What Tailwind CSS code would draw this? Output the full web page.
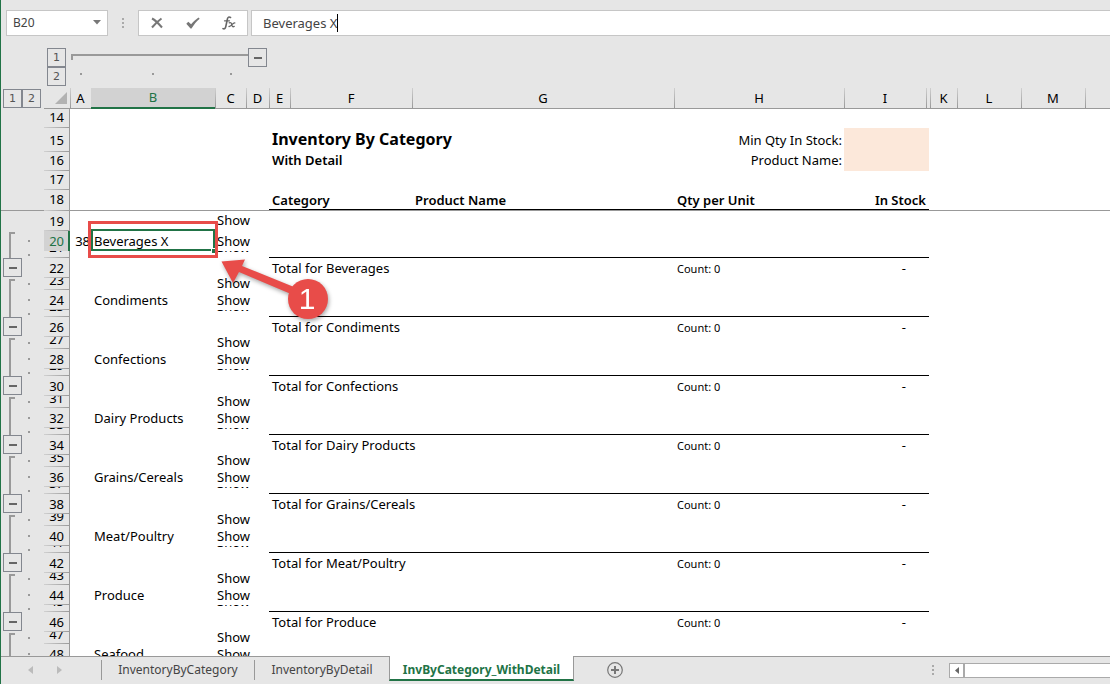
<!DOCTYPE html>
<html lang="en">
<head>
<meta charset="utf-8">
<title>Inventory By Category</title>
<script src="https://cdn.jsdelivr.net/npm/@tailwindcss/browser@4"></script>
</head>
<body class="h-screen overflow-hidden flex flex-col bg-[#e6e6e6] border-l border-[#217346] font-['Noto_Sans',sans-serif] text-[13px] leading-[18px] text-black">

<header class="shrink-0 flex pl-[5px] pt-[10px] text-[#444] text-[12px]">
  <button aria-label="Name box, B20" class="w-[102px] h-[26px] px-[6px] flex items-center justify-between bg-white border border-[#c6c6c6]">
    <span>B20</span>
    <svg width="8" height="7" viewBox="0 0 8 7" fill="#777"><path d="M0 0h8L4 4.500z"/></svg>
  </button>
  <div class="w-[30px] flex flex-col items-center justify-center gap-[2px]">
    <i class="size-[2px] bg-[#aaa]"></i><i class="size-[2px] bg-[#aaa]"></i><i class="size-[2px] bg-[#aaa]"></i>
  </div>
  <div class="w-[110px] h-[26px] flex items-center justify-around bg-white border border-[#c6c6c6]">
    <button aria-label="Cancel" class="w-[34px] h-full flex items-center justify-center"><svg width="12" height="12" viewBox="0 0 12 12" fill="none" stroke="#777" stroke-width="2"><path d="M1 1.500C4 3 8 7 11 10.500M10.500 1.500C7 4 4 7 1 10.500"/></svg></button>
    <button aria-label="Enter" class="w-[34px] h-full flex items-center justify-center"><svg width="14" height="12" viewBox="0 0 14 12" fill="#777"><path d="M0.300 6.800L2.300 4.800l2.800 2.500C7.500 4.500 10 2.200 12.500 0.500L13.700 1.700C10.500 4 8 7.500 5.500 11.500H4.500z"/></svg></button>
    <button aria-label="Insert function" class="w-[34px] h-full flex items-center justify-center"><svg width="14" height="14" viewBox="0 0 14 14" fill="none" stroke="#666" stroke-linecap="round"><path d="M8.500 1.500C7 0.500 5.800 1 5.400 3L3.800 10.500C3.400 12.600 2.300 13.400 1 12.600" stroke-width="1.600"/><path d="M2.500 4.800h5" stroke-width="1.200"/><path d="M7.200 6.800c2-0.800 2.200 0.400 2.600 2s0.800 2.500 2.400 1.600M12.800 6.800c-2.200-0.300-3.600 4-5.800 3.700" stroke-width="1.300"/></svg></button>
  </div>
  <div class="ml-[3px] flex-1 h-[26px] pl-[11px] flex items-center bg-white border border-r-0 border-[#c6c6c6] text-[13px]">
    <input aria-label="Formula bar" value="Beverages X" class="field-sizing-content outline-none">
    <span class="w-px h-[18px] bg-black"></span>
  </div>
</header>

<section aria-label="Column outline" class="shrink-0 h-[52px] pt-[12px] pl-[46px] flex text-[11px] text-[#555] font-['DejaVu_Sans',sans-serif]">
  <div class="flex flex-col">
    <button class="size-[19px] leading-[17px] border border-[#83878f]">1</button>
    <button class="size-[19px] leading-[17px] border border-[#83878f]">2</button>
  </div>
  <div class="ml-[5px] w-[177px] pt-[6px]">
    <div class="h-[6px] border-t-2 border-l-2 border-[#999]"></div>
    <div class="mt-[13px] pl-[9px] flex">
      <i class="size-[2px] bg-[#999]"></i><i class="ml-[70px] size-[2px] bg-[#999]"></i><i class="ml-[76px] size-[2px] bg-[#999]"></i>
    </div>
  </div>
  <button aria-label="Collapse columns" class="size-[19px] flex items-center justify-center border border-[#83878f]"><i class="w-[8px] h-[2px] bg-[#666]"></i></button>
</section>

<main class="flex-1 min-h-0 overflow-hidden">
  <table class="w-full table-fixed border-separate border-spacing-0 bg-white">
    <colgroup>
      <col class="w-[21px]"><col class="w-[22px]"><col class="w-[26px]">
      <col class="w-[21px]"><col class="w-[124px]"><col class="w-[31px]"><col class="w-[23px]">
      <col class="w-[21px]"><col class="w-[122px]"><col class="w-[262px]"><col class="w-[170px]">
      <col class="w-[82px]"><col class="w-[4px]"><col class="w-[27px]"><col class="w-[64px]"><col class="w-[64px]"><col>
    </colgroup>
    <thead><tr id="letters" class="bg-[#e6e6e6]"></tr></thead>
    <tbody id="rows"></tbody>
  </table>
</main>

<footer class="shrink-0 h-[28px] flex items-start text-[#444] text-[12px]">
  <div class="h-[28px] w-[100px] pl-[27px] pt-[8px] flex gap-[24px] border-t border-[#999]">
    <button aria-label="Previous sheets" class="h-[10px]"><svg width="5" height="8" viewBox="0 0 5 8" fill="#bbb"><path d="M5 0v8L0 4z"/></svg></button>
    <button aria-label="Next sheets" class="h-[10px]"><svg width="5" height="8" viewBox="0 0 5 8" fill="#bbb"><path d="M0 0v8l5-4z"/></svg></button>
  </div>
  <nav class="flex h-[28px]">
    <div class="w-[153px] pt-[3px] border-t border-[#999]"><button class="w-full h-[20px] border-l border-[#999]">InventoryByCategory</button></div>
    <div class="w-[135px] pt-[3px] border-t border-[#999]"><button class="w-full h-[20px] border-l border-[#999]">InventoryByDetail</button></div>
    <button class="w-[185px] h-[25px] pt-[4px] bg-white border-x border-x-[#999] border-b-2 border-b-[#217346] text-[#217346] font-bold">InvByCategory_WithDetail</button>
  </nav>
  <div class="flex-1 h-[28px] pl-[33px] flex border-t border-[#999]">
    <button aria-label="New sheet" class="mt-[5px] h-[16px]"><svg width="16" height="16" viewBox="0 0 16 16" fill="none" stroke="#777"><circle cx="8" cy="8" r="7.300" stroke-width="1.200"/><path d="M8 4v8M4 8h8" stroke-width="2"/></svg></button>
    <div class="ml-auto mt-[8px] mr-[15px] flex flex-col gap-[2px]">
      <i class="size-[2px] bg-[#aaa]"></i><i class="size-[2px] bg-[#aaa]"></i><i class="size-[2px] bg-[#aaa]"></i>
    </div>
    <button aria-label="Scroll left" class="mt-[6px] w-[15px] h-[15px] flex items-center justify-center bg-white border border-[#aaa]"><svg width="4" height="7" viewBox="0 0 4 7" fill="#666"><path d="M4 0v7L0 3.500z"/></svg></button>
    <div class="mt-[6px] w-[146px] h-[15px] bg-white border border-r-0 border-[#aaa]"></div>
  </div>
</footer>

<template id="callout">
  <div class="absolute z-10 left-0 -top-[2px] w-[124px] h-[22px] border-2 border-[#217346]"></div>
  <i class="absolute z-10 left-[120px] top-[17px] size-[5px] bg-[#217346] border-t border-l border-white"></i>
  <div class="absolute z-20 -left-[3px] -top-[10px] w-[130px] h-[37px] border-3 border-[#e84c49]"></div>
  <svg class="absolute z-20 left-[124px] top-[21px] drop-shadow-[1px_2px_2px_rgba(0,0,0,0.35)]" width="120" height="75" viewBox="0 0 120 75" fill="#e84c49">
    <path d="M6.500 9.500L30 7.500l-3 6.500 52 21-3 7-52-22-6 11z"/>
    <circle cx="93" cy="47" r="20"/>
    <text x="92" y="57" text-anchor="middle" fill="#fff" font-family="Liberation Sans, sans-serif" font-size="30">1</text>
  </svg>
</template>

<script>
const letters = ['A','B','C','D','E','F','G','H','I','','K','L','M',''];
const sep = '<i class="absolute left-0 top-0 h-full w-px bg-linear-to-b from-[#d0d0d0] to-[#999]"></i>';
document.getElementById('letters').innerHTML =
  '<th colspan="2" class="p-0"><div class="flex pl-[2px] text-[11px] text-[#555] font-[\'DejaVu_Sans\',sans-serif] font-normal">' +
  '<button class="size-[19px] leading-[17px] border border-[#83878f]">1</button><button class="size-[19px] leading-[17px] border border-[#83878f]">2</button></div></th>' +
  '<th class="p-0 border-b border-[#999]"><button aria-label="Select all" class="h-[20px] w-full flex justify-end items-end pr-[3px] pb-[4px]"><svg width="12" height="12" viewBox="0 0 12 12" fill="#b2b2b2"><path d="M12 0v12H0z"/></svg></button></th>' +
  letters.map(l => l === 'B'
    ? '<th class="p-0 h-[21px] leading-[19px] font-normal bg-[#d2d2d2] text-[#217346] border-b-2 border-[#217346]">B</th>'
    : `<th class="relative p-0 h-[21px] leading-[20px] font-normal border-b border-[#999]">${sep}${l}</th>`).join('');

const categories = ['Beverages','Condiments','Confections','Dairy Products','Grains/Cereals','Meat/Poultry','Produce','Seafood'];
const H = {14:'h-[19px]',15:'h-[24px]',16:'h-[19px]',17:'h-[19px]',18:'h-[21px]',19:'h-[20px]'};
const cycle = ['h-[20px]','h-[7px]','h-[20px]','h-[12px]'];
const box = '<button aria-label="Collapse rows" class="ml-[2px] size-[19px] flex items-center justify-center border border-[#83878f]"><i class="w-[8px] h-[2px] bg-[#666]"></i></button>';
let html = '';
for (let n = 14; n <= 49; n++) {
  const h = n < 20 ? H[n] : cycle[n % 4];
  const kind = n < 20 ? -1 : n % 4;            // 0 item, 1 thin, 2 total, 3 spacer
  const cat = categories[Math.floor((n - 20) / 4)];
  const frozen = n === 18 ? 'border-b border-[#999]' : '';
  const align = n === 15 || n === 19 ? 'items-center' : n < 20 ? 'items-center pb-[3px]' : kind === 1 ? 'items-end pb-[2px]' : 'items-end pb-px';
  const cell = (inner, span = 1, cls = '', over = '') =>
    `<td colspan="${span}" class="relative p-0"><div class="${h} ${frozen} ${cls.includes('items-') ? '' : align} ${cls} flex overflow-hidden whitespace-nowrap">${inner}</div>${over}</td>`;
  let r = '<tr>';
  if (n < 20) r += `<td colspan="2" class="p-0 bg-[#e6e6e6]"><div class="${h} ${frozen}"></div></td>`;
  else {
    if (kind === 2) r += `<td class="p-0 bg-[#e6e6e6]"><div class="${h}">${box}</div></td>`;
    else if (n === 20 || kind === 3) r += `<td rowspan="${n === 20 ? 2 : 3}" class="p-0 h-px bg-[#e6e6e6]"><div class="h-full pt-[1px] pl-[8px]"><div class="h-full w-[6px] border-t-2 border-l-2 border-[#999]"></div></div></td>`;
    r += `<td class="p-0 bg-[#e6e6e6]"><div class="${h} pl-[6px] flex items-center">${kind === 2 ? '' : '<i class="size-[2px] bg-[#999]"></i>'}</div></td>`;
  }
  r += n === 20
    ? '<th class="p-0 font-normal bg-[#d2d2d2] text-[#217346]"><div class="h-[20px] pr-[4px] pb-px flex items-end justify-end border-r-2 border-[#217346]">20</div></th>'
    : `<th class="relative p-0 font-normal bg-[#e6e6e6]"><div class="${h} ${align} pr-[5px] flex justify-end overflow-hidden border-r border-[#999]">${n}</div><i class="absolute left-0 bottom-0 w-full h-px bg-linear-to-r from-[#d0d0d0] to-[#999]"></i></th>`;
  r += cell(n === 20 ? '38' : '', 1, 'justify-end pr-px');
  r += cell(kind === 0 ? (n === 20 ? 'Beverages X' : cat) : '', 1, 'pl-[3px]', n === 20 ? document.getElementById('callout').innerHTML : '');
  r += cell((kind >= 0 && kind !== 2) || n === 19 ? 'Show' : '', 2, n === 19 || kind === 3 ? 'items-center pb-[2px] pl-[2px]' : 'pl-[2px]');
  const rest = cell('', 4);
  if (n === 15) r += cell('<h1 class="font-bold text-[16px] leading-[22px] pb-[2px]">Inventory By Category</h1>', 3, 'pl-[3px]')
    + cell('<label for="minqty">Min Qty In Stock:</label>', 1, 'justify-end pr-[2px]')
    + cell('<input id="minqty" class="w-full h-full mr-px bg-[#fce8da]">', 2) + rest;
  else if (n === 16) r += cell('<h2 class="font-semibold">With Detail</h2>', 3, 'pl-[3px]')
    + cell('<label for="pname">Product Name:</label>', 1, 'justify-end pr-[2px]')
    + cell('<input id="pname" class="w-full h-full mr-px bg-[#fce8da]">', 2, 'items-stretch') + rest;
  else if (n === 18) {
    const b = 'w-full h-[20px] leading-[21px] border-b border-black font-semibold';
    r += cell(`<div class="${b} pl-[3px]">Category</div>`, 2, 'items-start') + cell(`<div class="${b} pl-[3px]">Product Name</div>`, 1, 'items-start')
      + cell(`<div class="${b} pl-[3px]">Qty per Unit</div>`, 1, 'items-start') + cell(`<div class="${b} mr-px pr-[3px] text-right">In Stock</div>`, 2, 'items-start') + rest;
  } else if (kind === 1) r += cell('<div class="w-full h-px mr-px bg-black"></div>', 6, 'items-end') + rest;
  else if (kind === 2) r += cell('Total for ' + cat, 3, 'pl-[3px]') + cell('<span class="text-[11px]">Count: 0</span>', 1, 'items-end pl-[3px]')
      + cell('-', 2, 'justify-end pr-[24px]') + rest;
  else r += cell('', 6) + rest;
  html += r + '</tr>';
}
document.getElementById('rows').innerHTML = html;
</script>
</body>
</html>
